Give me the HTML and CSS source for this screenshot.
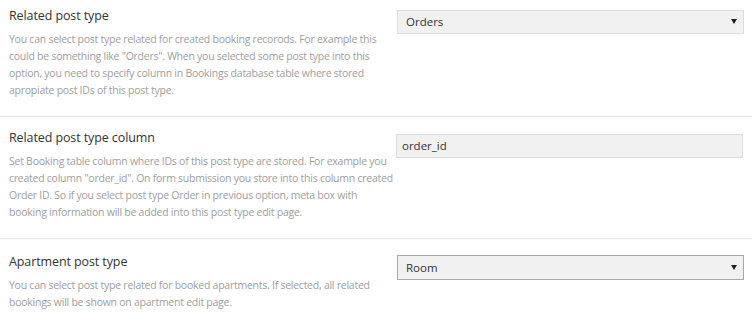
FILE: index.html
```html
<!DOCTYPE html>
<html lang="en">
<head>
    <meta charset="UTF-8">
    <meta name="viewport" content="width=device-width, initial-scale=1.0">
    <title>Booking settings</title>
    <link rel="stylesheet" href="styles.css">
</head>
<body>
    <div class="settings">
        <div class="option">
            <div class="option-info">
                <h3>Related post type</h3>
                <p>You can select post type related for created booking recorods. For example this could be something like "Orders". When you selected some post type into this option, you need to specify column in Bookings database table where stored apropiate post IDs of this post type.</p>
            </div>
            <div class="option-field">
                <div class="select-wrap">
                    <select id="related_post_type">
                        <option>Orders</option>
                        <option>Posts</option>
                        <option>Pages</option>
                    </select>
                </div>
            </div>
        </div>

        <div class="option">
            <div class="option-info">
                <h3>Related post type column</h3>
                <p>Set Booking table column where IDs of this post type are stored. For example you created column "order_id". On form submission you store into this column created Order ID. So if you select post type Order in previous option, meta box with booking information will be added into this post type edit page.</p>
            </div>
            <div class="option-field">
                <input type="text" id="related_post_type_column" value="order_id">
            </div>
        </div>

        <div class="option">
            <div class="option-info">
                <h3>Apartment post type</h3>
                <p>You can select post type related for booked apartments. If selected, all related bookings will be shown on apartment edit page.</p>
            </div>
            <div class="option-field">
                <div class="select-wrap">
                    <select id="apartment_post_type" class="dark">
                        <option>Room</option>
                        <option>Apartment</option>
                    </select>
                </div>
            </div>
        </div>
    </div>
</body>
</html>
```

FILE: styles.css
```css
body {
    margin: 0;
    background: #fff;
    font-family: "Open Sans", Arial, sans-serif;
    color: #333;
}
.settings {
    width: 752px;
}
.option {
    display: flex;
    padding: 12px 0 17px;
    border-bottom: 1px solid #e6e6e6;
}
.option:first-child {
    padding-top: 7px;
}
.option:last-child {
    border-bottom: none;
    padding-top: 14px;
}
.option-info {
    width: 384px;
    padding-left: 9px;
}
.option-info h3 {
    margin: 0 0 6px;
    font-size: 12.5px;
    line-height: 18px;
    font-weight: normal;
    letter-spacing: -0.1px;
    color: #333;
}
.option-info p {
    margin: 0;
    font-size: 10.5px;
    line-height: 17px;
    letter-spacing: -0.25px;
    color: #a0a0a0;
}
.option-field {
    padding-left: 4px;
    padding-top: 2px;
}
.option:nth-child(2) .option-field {
    padding-top: 4px;
}
.select-wrap {
    position: relative;
    width: 347px;
}
.select-wrap::after {
    content: "";
    position: absolute;
    right: 7px;
    top: 10px;
    border-left: 3px solid transparent;
    border-right: 3px solid transparent;
    border-top: 5px solid #222;
    pointer-events: none;
}
select {
    appearance: none;
    -webkit-appearance: none;
    width: 347px;
    height: 24px;
    margin: 0;
    padding: 0 8px;
    font-family: inherit;
    font-size: 11.5px;
    color: #333;
    background: #f1f1f1;
    border: 1px solid #dcdcdc;
    border-radius: 0;
}
select.dark {
    border-color: #a8a8a8;
    height: 25px;
}
input[type="text"] {
    box-sizing: border-box;
    width: 347px;
    height: 24px;
    margin: 0 0 0 -1px;
    padding: 0 5px;
    font-family: inherit;
    font-size: 11.5px;
    color: #333;
    background: #f1f1f1;
    border: 1px solid #dcdcdc;
    border-radius: 0;
}
```
